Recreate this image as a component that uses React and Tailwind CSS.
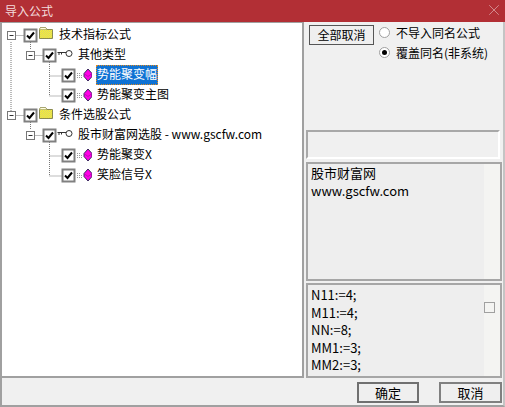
import React from 'react';
import { X } from 'lucide-react';

const FONT = '"Microsoft YaHei", "Noto Sans CJK SC", "Liberation Sans", sans-serif';

// one tree row: guides are the dotted bits that run through the gutter
const treeRows = [
  { level: 0, label: '技术指标公式', icon: 'folder', expander: true, guides: ['M11 16V20', 'M30.5 16V20'] },
  { level: 1, label: '其他类型', icon: 'key', expander: true, guides: ['M11 0V20', 'M30.5 0V3', 'M49.5 16V20'] },
  { level: 2, label: '势能聚变幅', icon: 'leaf', selected: true, guides: ['M11 0V20', 'M49.5 0V20', 'M49.5 10H62'] },
  { level: 2, label: '势能聚变主图', icon: 'leaf', guides: ['M11 0V20', 'M49.5 0V10H62'] },
  { level: 0, label: '条件选股公式', icon: 'folder', expander: true, guides: ['M11 0V5', 'M30.5 16V20'] },
  { level: 1, label: '股市财富网选股 - www.gscfw.com', icon: 'key', expander: true, guides: ['M30.5 0V3', 'M49.5 16V20'] },
  { level: 2, label: '势能聚变X', icon: 'leaf', guides: ['M49.5 0V20', 'M49.5 10H62'] },
  { level: 2, label: '笑脸信号X', icon: 'leaf', guides: ['M49.5 0V10H62'] },
];

const gutterWidth = [38, 57, 76];

const TreeGutter = ({ level, expander, guides }) => {
  const boxX = level === 0 ? 24.5 : level === 1 ? 43.5 : 62.5;
  const expX = level === 0 ? 7.5 : 26.5;
  return (
    <svg width={gutterWidth[level]} height="20" className="shrink-0 -ml-[2px]">
      {guides.map(d => (
        <path key={d} d={d} fill="none" stroke="#777" strokeDasharray="1 1" />
      ))}
      {expander && (
        <g>
          <path d={`M${expX + 9} 9.5H${boxX}`} fill="none" stroke="#777" strokeDasharray="1 1" />
          <rect x={expX} y="5.5" width="8" height="8" fill="#fff" stroke="#777" />
          <path d={`M${expX + 2} 9.5H${expX + 6}`} stroke="#333" />
        </g>
      )}
      <rect x={boxX} y="3.5" width="12" height="12" fill="#fff" stroke="#808080" strokeWidth="2" />
      <path d={`M${boxX + 2.5} 9.5l2.5 2.5 4.5-5.5`} fill="none" stroke="#000" strokeWidth="2" />
    </svg>
  );
};

const FolderIcon = () => (
  <svg width="16" height="14" viewBox="0 0 16 14" className="shrink-0 mb-1.5">
    <defs>
      <pattern id="dither" width="2" height="2" patternUnits="userSpaceOnUse">
        <rect width="2" height="2" fill="#fbf32e" />
        <rect width="1" height="1" fill="#d6d16c" />
        <rect x="1" y="1" width="1" height="1" fill="#d6d16c" />
      </pattern>
    </defs>
    <path d="M1.5 3.5L2.5 1.5H7.5L9 3.5H14.5V12.5H1.5Z" fill="url(#dither)" stroke="#8a8a50" />
    <path d="M2.5 1.5H7.5L9 3.5H1.5Z" fill="#fffde0" stroke="#8a8a50" strokeWidth="0.5" />
  </svg>
);

const KeyIcon = () => (
  <svg width="16" height="9" viewBox="0 0 16 9" className="shrink-0 mb-1.5">
    <circle cx="12" cy="4.5" r="3" fill="#fff" stroke="#333" />
    <path d="M0.5 3.5H9M2 3.5V6M4.5 3.5V5.5" fill="none" stroke="#333" />
  </svg>
);

const LeafIcon = () => (
  <svg width="16" height="14" viewBox="0 0 16 14" className="shrink-0 mb-[3px]">
    <path d="M1 5.5H5M1 7.5H7M1 9.5H7" stroke="#999" strokeDasharray="1 1" />
    <path d="M12 1L16 5.5V8.5L12 13L8 8.5V5.5Z" fill="#ff00e6" stroke="#3a2a60" />
    <path d="M8 5.5L12 8.5L16 5.5" fill="none" stroke="#a010a0" strokeWidth="0.7" />
  </svg>
);

const rowIcons = { folder: FolderIcon, key: KeyIcon, leaf: LeafIcon };

const TreeRow = ({ level, label, icon, expander, selected, guides }) => {
  const Icon = rowIcons[icon];
  return (
    <div className="flex items-center h-5">
      <TreeGutter level={level} expander={expander} guides={guides} />
      <Icon />
      {selected ? (
        <span className="ml-[4px] -mt-[3px] px-[1px] h-[20px] leading-[18px] text-white bg-[#0f72d3] outline-1 outline-dotted -outline-offset-1 outline-[#e08a20]">
          {label}
        </span>
      ) : (
        <span className="ml-[5px] -mt-[5px] text-black">{label}</span>
      )}
    </div>
  );
};

const Radio = ({ checked, label }) => (
  <label className="flex items-center h-5">
    <span className="w-[11px] h-[11px] rounded-full bg-white border border-[#a0a0a0] flex items-center justify-center shrink-0">
      {checked && <span className="w-[5px] h-[5px] rounded-full bg-black" />}
    </span>
    <span className="ml-[6px] mt-[2px]">{label}</span>
  </label>
);

export default function App() {
  return (
    <div
      className="w-[505px] h-[407px] flex flex-col bg-[#f0f0f0] text-[12px] leading-[16px] text-black overflow-hidden"
      style={{ fontFamily: FONT }}
    >
      <div className="h-[22px] shrink-0 bg-[#b22f35] flex items-center justify-between pl-[5px] pr-[2px] text-[#f3dcdd]">
        <span>导入公式</span>
        <X size={18} strokeWidth={0.8} className="text-[#e8c4c6] -mt-[3px]" />
      </div>

      <div className="flex-1 flex min-h-0 border-l-2 border-l-[#a0a0a0] border-r-2 border-r-[#c4c4c4]">
        <div className="w-[302px] shrink-0 bg-white border-t border-r-2 border-b-2 border-[#a0a0a0] pt-[3px]">
          {treeRows.map(row => (
            <TreeRow key={row.label} {...row} />
          ))}
        </div>

        <div className="flex-1 flex flex-col pl-[2px] pr-[1px]">
          <div className="h-[108px] shrink-0 flex items-start pt-[3px]">
            <button className="ml-[3px] w-[65px] h-[20px] bg-[#efefef] border border-[#555] text-[12px] leading-none">
              全部取消
            </button>
            <div className="ml-[5px] flex flex-col -mt-[3px]">
              <Radio label="不导入同名公式" />
              <Radio checked label="覆盖同名(非系统)" />
            </div>
          </div>

          <div className="h-[29px] shrink-0 mr-[2px] border-2 border-t-[#a8a8a8] border-l-[#a8a8a8] border-r-white border-b-white mb-[3px]" />

          <div className="h-[119px] shrink-0 border-2 border-[#a6a6a6] pl-[3px] text-[13px] leading-[18px] mb-[2px] bg-[linear-gradient(to_right,#eeeeee_176px,#f4f4f2_176px)]">
            <div>股市财富网</div>
            <div>www.gscfw.com</div>
          </div>

          <div className="flex-1 border-2 border-[#a6a6a6] pl-[3px] pt-[1px] text-[13px] leading-[17.5px] relative bg-[linear-gradient(to_right,#eeeeee_176px,#f4f4f2_176px)]">
            <div>N11:=4;</div>
            <div>M11:=4;</div>
            <div>NN:=8;</div>
            <div>MM1:=3;</div>
            <div>MM2:=3;</div>
            <span className="absolute right-[5px] top-[17px] w-[11px] h-[11px] border border-[#a0a0a0]" />
          </div>
        </div>
      </div>

      <div className="h-[29px] shrink-0 flex justify-end items-start pt-[4px] pr-[1px] gap-[20px] border-l-2 border-l-[#a0a0a0] border-r-2 border-r-[#c4c4c4] border-b-2 border-b-[#a0a0a0]">
        <button className="h-[21px] w-[62px] bg-[#efefef] border-2 border-[#707070] text-[13px] leading-none">确定</button>
        <button className="h-[21px] w-[63px] bg-[#efefef] border-2 border-[#808080] text-[13px] leading-none">取消</button>
      </div>
    </div>
  );
}
